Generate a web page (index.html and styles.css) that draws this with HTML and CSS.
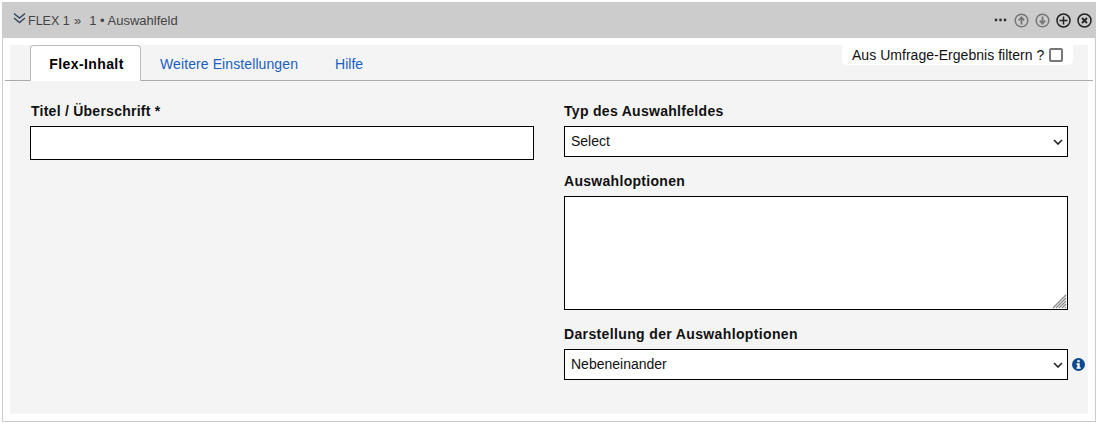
FILE: index.html
```html
<!DOCTYPE html>
<html lang="de">
<head>
<meta charset="utf-8">
<title>Flex</title>
<link rel="stylesheet" href="styles.css">
</head>
<body>
<div class="panel">
  <header class="head">
    <div class="crumbs">
      <svg class="chev" width="13" height="12" viewBox="0 0 13 12"><path d="M1 1.500 6.500 6 12 1.500M1 6 6.500 10.500 12 6" fill="none" stroke="#34465c" stroke-width="1.4"/></svg>
      <span class="flex">FLEX 1</span><span class="sep">»</span><span class="item">1 • Auswahlfeld</span>
    </div>
    <div class="tools">
      <svg class="dots" width="13" height="4" viewBox="0 0 13 4"><circle cx="2" cy="2" r="1.400"/><circle cx="6.500" cy="2" r="1.400"/><circle cx="11" cy="2" r="1.400"/></svg>
      <svg class="tool dim" width="15" height="15" viewBox="0 0 15 15"><circle cx="7.500" cy="7.500" r="6.300"/><path class="bold" d="M7.500 11.500V4.500M4.800 7.300 7.500 4.300 10.200 7.300"/></svg>
      <svg class="tool dim" width="15" height="15" viewBox="0 0 15 15"><circle cx="7.500" cy="7.500" r="6.300"/><path class="bold" d="M7.500 3.500V10.500M4.800 7.700 7.500 10.700 10.200 7.700"/></svg>
      <svg class="tool" width="15" height="15" viewBox="0 0 15 15"><circle cx="7.500" cy="7.500" r="6.500"/><path d="M7.500 3.500V11.500M3.500 7.500H11.500"/></svg>
      <svg class="tool" width="15" height="15" viewBox="0 0 15 15"><circle cx="7.500" cy="7.500" r="6.500"/><path class="bold" d="M5 5 10 10M10 5 5 10"/></svg>
    </div>
  </header>
  <div class="body">
    <div class="content">
      <nav class="tabs">
        <a class="tab active">Flex-Inhalt</a>
        <a class="tab">Weitere Einstellungen</a>
        <a class="tab last">Hilfe</a>
        <label class="filter">Aus Umfrage-Ergebnis filtern ?<span class="check"></span></label>
      </nav>
      <div class="form">
        <div class="col">
          <div class="field">
            <div class="label indent">Titel / Überschrift *</div>
            <div class="input"></div>
          </div>
        </div>
        <div class="col">
          <div class="field">
            <div class="label">Typ des Auswahlfeldes</div>
            <div class="select">Select<svg class="arrow" width="10" height="6" viewBox="0 0 10 6"><path d="M1 1 5 5 9 1"/></svg></div>
          </div>
          <div class="field">
            <div class="label">Auswahloptionen</div>
            <div class="textarea"><svg class="grip" width="15" height="15" viewBox="0 0 15 15"><path d="M1 14 14 1M4 14 14 4M7 14 14 7M10 14 14 10M13 14 14 13"/></svg></div>
          </div>
          <div class="field">
            <div class="label wide">Darstellung der Auswahloptionen</div>
            <div class="select-row">
              <div class="select">Nebeneinander<svg class="arrow" width="10" height="6" viewBox="0 0 10 6"><path d="M1 1 5 5 9 1"/></svg></div>
              <svg class="info" width="13" height="13" viewBox="0 0 13 13"><circle cx="6.500" cy="6.500" r="6.500" fill="#0b4a8f"/><rect x="5.300" y="2.200" width="2.400" height="2" fill="#fff"/><path d="M4.500 5.300H7.700V9.300H8.700V10.800H4.500V9.300H5.400V6.700H4.500Z" fill="#fff"/></svg>
            </div>
          </div>
        </div>
      </div>
    </div>
  </div>
</div>
</body>
</html>
```
FILE: styles.css
```css
* { box-sizing: border-box; }
html, body { margin: 0; padding: 0; background: #fff; }
body { font-family: "Liberation Sans", Arial, sans-serif; font-size: 14px; color: #000; }
.panel { margin: 2px 1px 0 2px; width: 1094px; height: 420px; border: 1px solid #ccc; border-top: 0; display: flex; flex-direction: column; }
.head { margin-left: -1px; margin-right: -1px; height: 36px; flex: none; background: #ccc; display: flex; align-items: center; justify-content: space-between; padding: 0 4px 0 11px; }
.crumbs { display: flex; align-items: center; font-size: 13px; color: #444; line-height: 16px; padding-top: 1px; }
.chev { margin-right: 2px; margin-top: -5px; }
.flex { width: 42px; font-size: 12.500px; white-space: nowrap; }
.sep { margin: 0 8px 0 4px; }
.tools { display: flex; align-items: center; gap: 6px; }
.dots { fill: #333; margin-right: 1px; }
.tool { fill: none; stroke: #222; stroke-width: 1.500; }
.tool.dim { stroke: #777; }
.tool .bold { stroke-width: 1.800; }
.body { flex: 1; padding: 7px 7px 7px 7px; }
.content { height: 100%; background: #f4f4f4; }
.tabs { position: relative; display: flex; height: 36px; margin: 0 -5px; padding-left: 25px; border-bottom: 1px solid #aaa; }
.tab { display: flex; align-items: center; padding: 1px 19px 0; height: 36px; color: #1a5fc4; font-size: 14px; letter-spacing: 0.100px; }
.tab + .tab { padding: 1px 18px 0; }
.tab.last { margin-left: 1px; letter-spacing: 0; }
.tab.active { width: 111px; justify-content: center; padding: 1px 0 0 2px; margin-right: 1px; background: #fff; color: #000; font-weight: 700; letter-spacing: 0.400px; border: 1px solid #bbb; border-bottom: 0; border-radius: 4px 4px 0 0; }
.filter { position: absolute; top: 0; right: 20px; width: 231px; height: 20px; background: #fff; border-radius: 0 0 5px 5px; display: flex; align-items: center; padding-left: 10px; font-size: 14px; color: #111; letter-spacing: 0.030px; }
.check { width: 14px; height: 14px; margin-left: 5px; background: #fff; border: 2px solid #777; border-radius: 2px; }
.form { display: flex; gap: 30px; padding: 22px 20px 0; }
.col { width: 504px; display: flex; flex-direction: column; gap: 16px; }
.label { font-weight: 700; font-size: 14px; letter-spacing: 0.300px; line-height: 16px; margin-bottom: 7px; color: #111; }
.indent { padding-left: 1px; letter-spacing: 0.250px; }
.wide { letter-spacing: 0.360px; }
.input { height: 34px; background: #fff; border: 1px solid #000; }
.select { position: relative; height: 31px; width: 504px; background: #fff; border: 1px solid #000; display: flex; align-items: center; padding: 0 0 2px 6px; font-size: 14px; color: #111; flex: none; }
.arrow { position: absolute; right: 4px; top: 12px; fill: none; stroke: #222; stroke-width: 1.600; }
.textarea { position: relative; height: 114px; background: #fff; border: 1px solid #000; }
.grip { position: absolute; right: 0; bottom: 0; fill: none; stroke: #888; stroke-width: 1.300; }
.select-row { display: flex; align-items: center; gap: 4px; width: 521px; }
.info { margin-top: -1px; }
```
